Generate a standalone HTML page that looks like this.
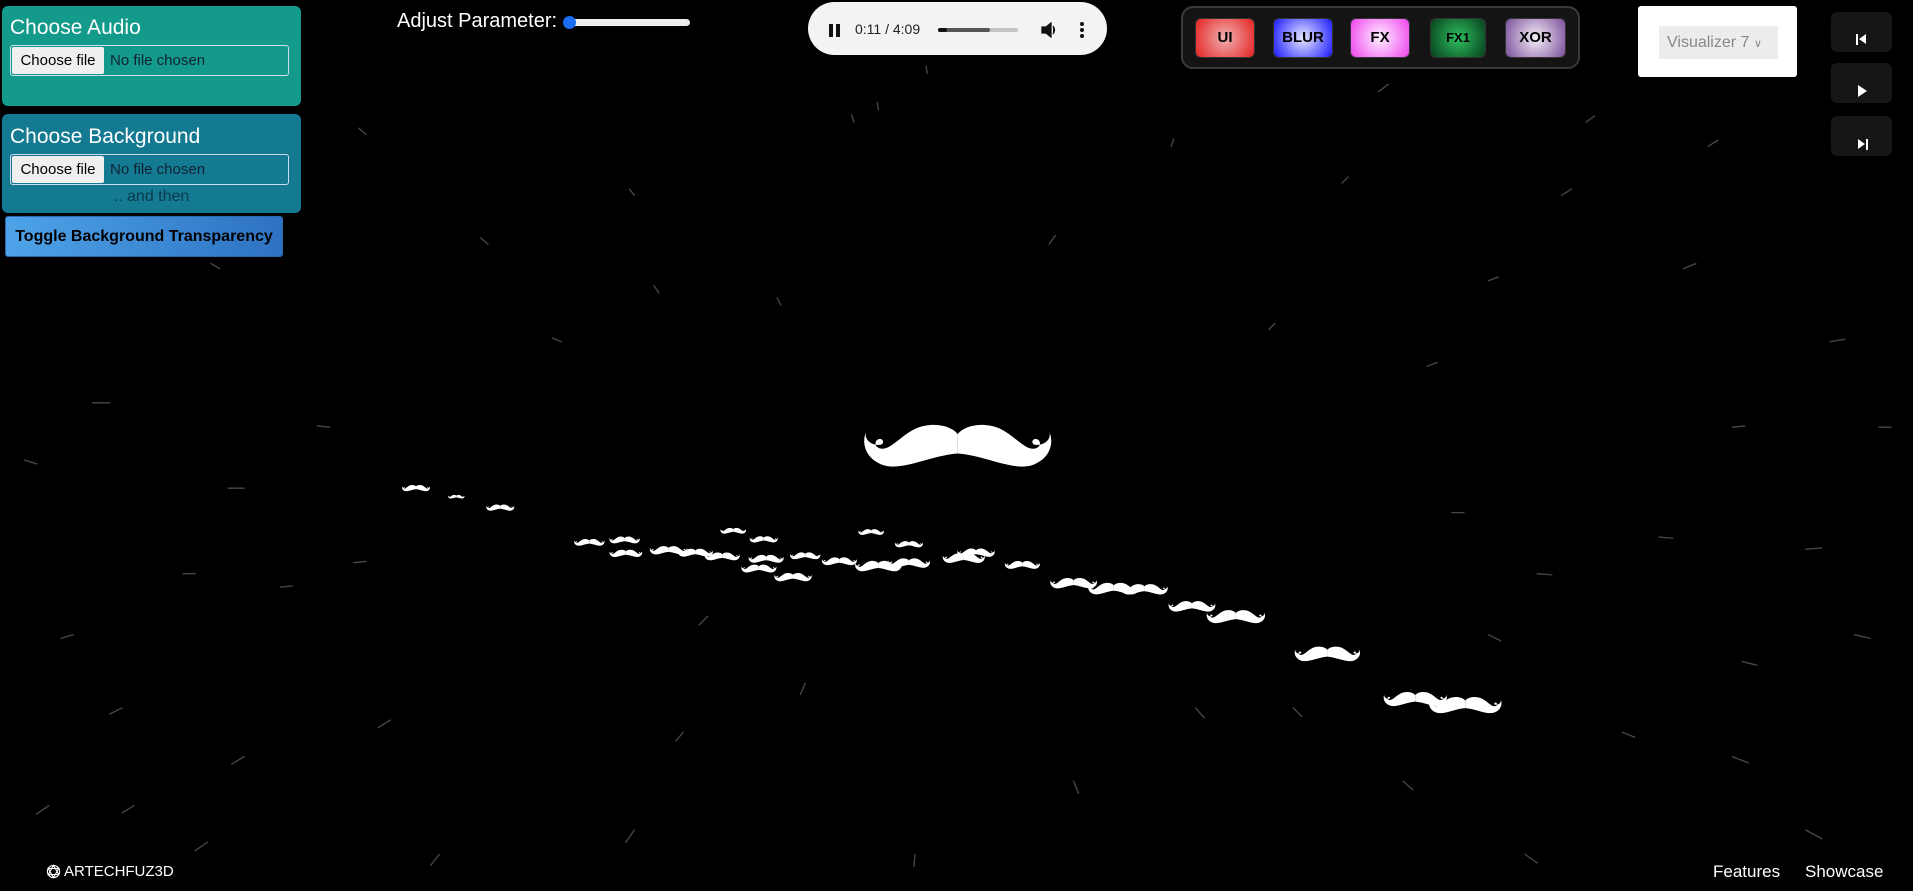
<!DOCTYPE html>
<html><head><meta charset="utf-8"><style>
*{box-sizing:border-box;margin:0;padding:0}
body{width:1913px;height:891px;background:#000;position:relative;overflow:hidden;font-family:"Liberation Sans",sans-serif}
.abs{position:absolute}
.panel{position:absolute;left:2px;width:299px;border-radius:6px}
.title{position:absolute;left:8px;color:#fff;font-size:21px}
.file{position:absolute;left:10px;width:279px;height:31px;border:1px solid #cde;border-radius:3px}
.file span.b{position:absolute;left:1px;top:1px;bottom:1px;width:92px;background:#efefef;color:#000;font-size:15px;line-height:27px;text-align:center;border-radius:2px}
.file span.t{position:absolute;left:99px;top:0;line-height:29px;font-size:15px;color:#123}
.fx{position:absolute;top:18px;height:40px;border-radius:6px;border:1px solid #333;font-weight:bold;font-size:15px;line-height:38px;text-align:center;color:#000}
.rb{position:absolute;left:1831px;width:61px;height:40px;background:#161616;border-radius:6px}
</style></head><body>
<svg class="abs" style="left:0;top:0" width="1913" height="891" viewBox="0 0 1568 730" preserveAspectRatio="none">
<defs>
<symbol id="m" viewBox="0 0 200 50"><g id="h"><path d="M100,12 C92,2 72,0 58,6 C42,13 32,28 22,27 C14,26 14,18 20,17 C24,17 25,22 21,23 C12,24 4,18 6,10 C1,22 6,38 24,44 C44,50 72,34 100,32 Z" fill="#fff"/></g><use href="#h" transform="translate(200,0) scale(-1,1)"/></symbol>
</defs>
<g stroke="#ccc" stroke-width="1.1" stroke-linecap="round" opacity="0.35">
<path d="M1130,75 L1138,69 M1300,100 L1307,95 M1280,160 L1288,155 M1420,350 L1430,349 M1440,545 L1428,542 M1420,620 L1433,625 M1330,600 L1340,604 M1250,700 L1260,707 M1480,450 L1493,449 M1500,280 L1512,278 M1380,220 L1390,216 M1220,230 L1228,227 M1100,150 L1105,145 M960,120 L962,114 M860,200 L865,193 M700,100 L698,94 M520,160 L516,155 M400,200 L394,195 M300,110 L294,105 M180,220 L173,216 M90,330 L76,330 M30,380 L20,377 M200,400 L187,400 M270,350 L260,349 M40,660 L30,667 M110,660 L100,666 M200,620 L190,626 M170,690 L160,697 M320,590 L310,596 M360,700 L353,709 M520,680 L513,690 M560,600 L554,607 M580,505 L573,512 M660,560 L656,569 M750,700 L749,710 M880,640 L884,650 M980,580 L987,588 M1060,580 L1067,587 M1150,640 L1158,647 M1220,520 L1230,525 M1360,440 L1371,441 M1540,350 L1550,350 M1520,520 L1533,523 M1480,680 L1493,687 M1170,300 L1178,297 M1040,270 L1045,265 M640,250 L637,244 M540,240 L536,234 M460,280 L453,277 M160,470 L150,470 M240,480 L230,481 M60,520 L50,523 M100,580 L90,585 M1400,120 L1408,115 M1190,420 L1200,420 M1260,470 L1272,471 M720,90 L719,84 M760,60 L759,54 M300,460 L290,461"/>
</g>
<use href="#m" x="705" y="346" width="160" height="40"/>
<use href="#m" x="328" y="397" width="26" height="6"/>
<use href="#m" x="367" y="405" width="14" height="4"/>
<use href="#m" x="398" y="413" width="24" height="6"/>
<use href="#m" x="470" y="441" width="26" height="7"/>
<use href="#m" x="499" y="439" width="26" height="7"/>
<use href="#m" x="499" y="450" width="28" height="7"/>
<use href="#m" x="531" y="447" width="34" height="8"/>
<use href="#m" x="555" y="449" width="30" height="8"/>
<use href="#m" x="577" y="452" width="30" height="8"/>
<use href="#m" x="590" y="432" width="22" height="6"/>
<use href="#m" x="614" y="439" width="24" height="6"/>
<use href="#m" x="613" y="454" width="30" height="8"/>
<use href="#m" x="607" y="462" width="30" height="8"/>
<use href="#m" x="633" y="469" width="34" height="8"/>
<use href="#m" x="647" y="452" width="26" height="7"/>
<use href="#m" x="673" y="456" width="30" height="8"/>
<use href="#m" x="703" y="433" width="22" height="6"/>
<use href="#m" x="733" y="443" width="24" height="6"/>
<use href="#m" x="700" y="459" width="40" height="10"/>
<use href="#m" x="727" y="457" width="36" height="9"/>
<use href="#m" x="772" y="453" width="36" height="9"/>
<use href="#m" x="783" y="449" width="34" height="8"/>
<use href="#m" x="823" y="459" width="30" height="8"/>
<use href="#m" x="860" y="473" width="40" height="10"/>
<use href="#m" x="891" y="477" width="44" height="11"/>
<use href="#m" x="918" y="478" width="40" height="10"/>
<use href="#m" x="957" y="492" width="40" height="10"/>
<use href="#m" x="988" y="499" width="50" height="13"/>
<use href="#m" x="1060" y="529" width="56" height="14"/>
<use href="#m" x="1133" y="566" width="54" height="14"/>
<use href="#m" x="1170" y="570" width="62" height="16"/>
</svg>

<div class="panel" style="top:6px;height:100px;background:#139a8a">
<div class="title" style="top:10px">Choose Audio</div>
<div class="file" style="top:39px;left:8px"><span class="b">Choose file</span><span class="t">No file chosen</span></div>
</div>
<div class="panel" style="top:114px;height:99px;background:#137a92">
<div class="title" style="top:11px">Choose Background</div>
<div class="file" style="top:40px;left:8px"><span class="b">Choose file</span><span class="t">No file chosen</span></div>
<div class="abs" style="left:0;width:299px;top:74px;text-align:center;color:#0b3b4a;font-size:16px">.. and then</div>
</div>
<div class="abs" style="left:5px;top:216px;width:278px;height:41px;border-radius:3px;background:linear-gradient(90deg,#4ea3e8,#2d72c2);border:1px solid #2a6ab0;font-weight:bold;font-size:16px;line-height:39px;text-align:center;color:#000">Toggle Background Transparency</div>

<div class="abs" style="left:397px;top:10px;color:#fff;font-size:20px">Adjust Parameter:</div>
<div class="abs" style="left:565px;top:19px;width:125px;height:7px;background:#eee;border-radius:4px"></div>
<div class="abs" style="left:563px;top:16px;width:13px;height:13px;background:#1a6ef5;border-radius:50%"></div>

<div class="abs" style="left:808px;top:2px;width:299px;height:53px;background:#f1f3f4;border-radius:27px">
<div class="abs" style="left:21px;top:22px;width:4px;height:13px;background:#111"></div>
<div class="abs" style="left:28px;top:22px;width:4px;height:13px;background:#111"></div>
<div class="abs" style="left:47px;top:19px;font-size:14px;color:#222">0:11 / 4:09</div>
<div class="abs" style="left:130px;top:26px;width:80px;height:4px;background:#c4c4c4;border-radius:2px"></div>
<div class="abs" style="left:130px;top:26px;width:52px;height:4px;background:#555;border-radius:2px"></div>
<div class="abs" style="left:130px;top:26px;width:9px;height:4px;background:#111;border-radius:2px"></div>
<svg class="abs" style="left:233px;top:20px" width="16" height="16" viewBox="0 0 16 16"><path d="M1,5 H5 L10,1 V15 L5,11 H1 Z M12,4 Q15,8 12,12" fill="#111" stroke="#111" stroke-width="1.3"/></svg>
<div class="abs" style="left:272px;top:20px;width:4px;height:4px;background:#111;border-radius:50%;box-shadow:0 6px 0 #111,0 12px 0 #111"></div>
</div>

<div class="abs" style="left:1181px;top:6px;width:399px;height:63px;background:#141414;border:2px solid #3a3a3a;border-radius:12px"></div>
<div class="fx" style="left:1195px;width:60px;background:radial-gradient(circle,#f0b0b0,#e52222)">UI</div>
<div class="fx" style="left:1273px;width:60px;background:radial-gradient(circle,#e8e8ff,#1a1aff)">BLUR</div>
<div class="fx" style="left:1350px;width:60px;background:radial-gradient(circle,#fff0ff,#ee44ee)">FX</div>
<div class="fx" style="left:1430px;width:56px;font-size:13px;background:radial-gradient(circle,#2fbf5f,#06401c)">FX1</div>
<div class="fx" style="left:1505px;width:61px;background:radial-gradient(circle,#f5f0f8,#7a4d9a)">XOR</div>

<div class="abs" style="left:1638px;top:6px;width:159px;height:71px;background:#fff;border-radius:3px">
<div class="abs" style="left:21px;top:20px;width:119px;height:33px;background:#ececec;color:#888;font-size:16px;line-height:33px;padding-left:8px">Visualizer 7 <span style="font-size:11px">&#8744;</span></div>
</div>

<div class="rb" style="top:12px"><div class="abs" style="left:25px;top:22px;width:2px;height:11px;background:#fff"></div><div class="abs" style="left:28px;top:22px;border:5.5px solid transparent;border-right:7px solid #fff;border-left:0"></div></div>
<div class="rb" style="top:63px"><div class="abs" style="left:27px;top:22px;border:6px solid transparent;border-left:9px solid #fff;border-right:0"></div></div>
<div class="rb" style="top:116px"><div class="abs" style="left:27px;top:23px;border:5.5px solid transparent;border-left:7px solid #fff;border-right:0"></div><div class="abs" style="left:35px;top:23px;width:2px;height:11px;background:#fff"></div></div>

<svg class="abs" style="left:46px;top:864px" width="15" height="15" viewBox="0 0 16 16"><g fill="none" stroke="#fff" stroke-width="1.2"><circle cx="8" cy="8" r="6.5"/><path d="M8,1.5 L13.6,11.3 H2.4 Z M8,14.5 L2.4,4.7 H13.6 Z"/></g></svg>
<div class="abs" style="left:64px;top:863px;color:#fff;font-size:15px">ARTECHFUZ3D</div>
<div class="abs" style="left:1713px;top:862px;color:#fff;font-size:17px">Features</div>
<div class="abs" style="left:1805px;top:862px;color:#fff;font-size:17px">Showcase</div>
</body></html>
